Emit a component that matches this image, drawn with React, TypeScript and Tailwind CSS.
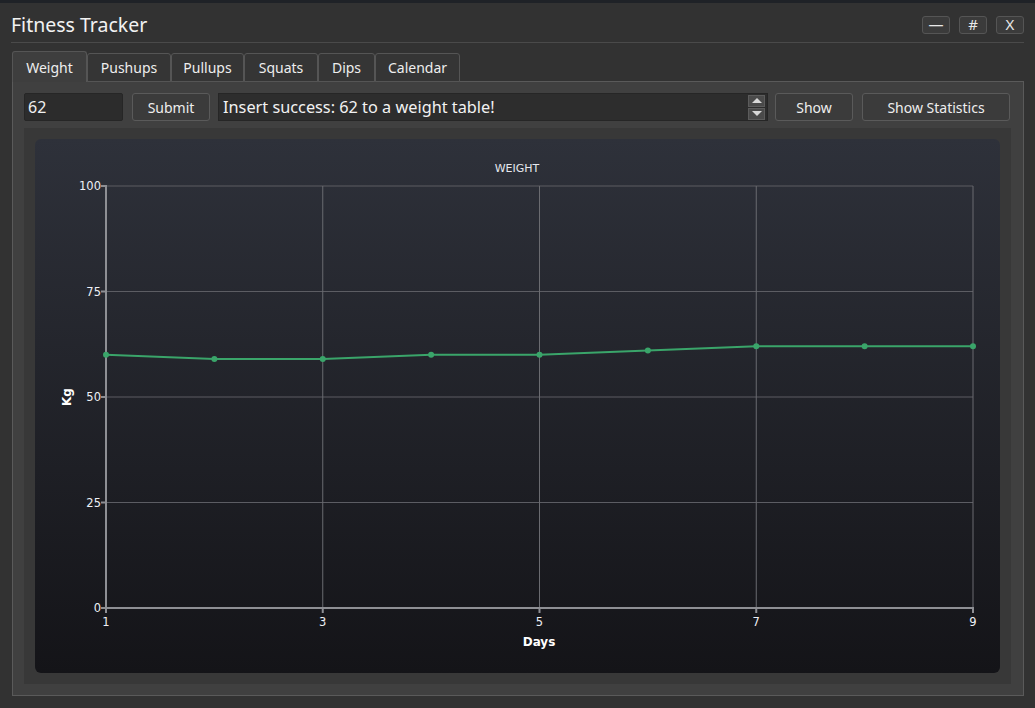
import React from "react";

const font = { fontFamily: '"Noto Sans", "Open Sans", sans-serif' };

const data = [60, 59, 59, 60, 60, 61, 62, 62, 62];

// plot area inside the svg
const PX0 = 71;
const PX1 = 938;
const PY0 = 47;
const PY1 = 469;

const sx = (d: number) => PX0 + ((d - 1) / 8) * (PX1 - PX0);
const sy = (v: number) => PY1 - (v / 100) * (PY1 - PY0);

function WeightChart() {
  const points = data.map((v, i) => `${sx(i + 1)},${sy(v)}`).join(" ");
  return (
    <svg width="965" height="534" viewBox="0 0 965 534" className="block">
      <defs>
        <linearGradient id="bg" x1="0" y1="0" x2="0" y2="1">
          <stop offset="0" stopColor="#2e313a" />
          <stop offset="1" stopColor="#141418" />
        </linearGradient>
      </defs>
      <rect x="0" y="0" width="965" height="534" rx="6" fill="url(#bg)" />
      <text x="482" y="33" fill="#e6e8ee" fontSize="11" textAnchor="middle" fontFamily="DejaVu Sans, sans-serif">
        WEIGHT
      </text>

      {/* grid */}
      {[25, 50, 75, 100].map((v) => (
        <line key={v} x1={PX0} x2={PX1} y1={sy(v)} y2={sy(v)} stroke="#5c5d63" strokeWidth="1" />
      ))}
      {[3, 5, 7, 9].map((d) => (
        <line key={d} x1={sx(d)} x2={sx(d)} y1={PY0} y2={PY1} stroke="#6a6b70" strokeWidth="1" />
      ))}

      {/* axes */}
      <line x1={PX0} x2={PX0} y1={PY0 - 1} y2={PY1 + 5} stroke="#8e8f94" strokeWidth="2" />
      <line x1={PX0 - 5} x2={PX1 + 1} y1={PY1} y2={PY1} stroke="#8e8f94" strokeWidth="2" />
      {[25, 50, 75, 100].map((v) => (
        <line key={v} x1={PX0 - 5} x2={PX0} y1={sy(v)} y2={sy(v)} stroke="#8e8f94" strokeWidth="2" />
      ))}
      {[3, 5, 7, 9].map((d) => (
        <line key={d} x1={sx(d)} x2={sx(d)} y1={PY1} y2={PY1 + 5} stroke="#8e8f94" strokeWidth="2" />
      ))}

      {/* labels */}
      {[0, 25, 50, 75, 100].map((v) => (
        <text
          key={v}
          x={PX0 - 5}
          y={sy(v) + 4}
          fill="#eef0f6"
          fontSize="11.5"
          textAnchor="end"
          fontFamily="DejaVu Sans, sans-serif"
        >
          {v}
        </text>
      ))}
      {[1, 3, 5, 7, 9].map((d) => (
        <text
          key={d}
          x={sx(d)}
          y={PY1 + 18}
          fill="#eef0f6"
          fontSize="11.5"
          textAnchor="middle"
          fontFamily="DejaVu Sans, sans-serif"
        >
          {d}
        </text>
      ))}
      <text
        x="0"
        y="0"
        transform="translate(36 258) rotate(-90)"
        fill="#ffffff"
        fontSize="12"
        fontWeight="bold"
        textAnchor="middle"
        fontFamily="DejaVu Sans, sans-serif"
      >
        Kg
      </text>
      <text x="504" y="507" fill="#ffffff" fontSize="12" fontWeight="bold" textAnchor="middle" fontFamily="DejaVu Sans, sans-serif">
        Days
      </text>

      {/* series */}
      <polyline points={points} fill="none" stroke="#3aa56a" strokeWidth="2" />
      {data.map((v, i) => (
        <circle key={i} cx={sx(i + 1)} cy={sy(v)} r="3" fill="#3aa56a" />
      ))}
    </svg>
  );
}

function WinButton({ label }: { label: string }) {
  return (
    <button className="w-[28px] h-[18px] rounded-[3px] border border-[#555] bg-[#3b3b3b] text-[#e8e8e8] text-[15px] leading-none flex items-center justify-center">
      {label}
    </button>
  );
}

function Btn({ label, w }: { label: string; w: string }) {
  return (
    <button
      className={`${w} h-[28px] rounded-[3px] border border-[#5a5a5a] bg-[#3b3b3b] text-[#eeeeee] text-[14px] flex items-center justify-center`}
    >
      {label}
    </button>
  );
}

const tabs = ["Weight", "Pushups", "Pullups", "Squats", "Dips", "Calendar"];
const tabWidths = ["w-[75px]", "w-[84px]", "w-[73px]", "w-[74px]", "w-[57px]", "w-[85px]"];

export default function App() {
  return (
    <div className="w-[1035px] h-[708px] bg-[#323232] border-t-[3px] border-[#1f2227] overflow-hidden" style={font}>
      <div className="h-[39px] px-[11px] flex items-center justify-between">
        <h1 className="text-[19.5px] text-[#f2f2f2] leading-none mt-[4px]">Fitness Tracker</h1>
        <div className="flex gap-[9px] mt-[4px]">
          <WinButton label="—" />
          <WinButton label="#" />
          <WinButton label="X" />
        </div>
      </div>
      <div className="mx-[11px] h-px bg-[#4a4a4a]" />

      <div className="ml-[12px] mt-[8px] flex items-end">
        {tabs.map((t, i) => (
          <div
            key={t}
            className={`${tabWidths[i]} ${
              i === 0 ? "h-[31px] bg-[#3e3e3e] border-b-0" : "h-[29px] bg-[#353535]"
            } rounded-t-[3px] border border-[#555] text-[14px] text-[#eeeeee] flex items-center justify-center`}
          >
            {t}
          </div>
        ))}
      </div>

      <div className="ml-[12px] w-[1012px] h-[615px] border border-[#5a5a5a] bg-[#404040] px-[11px] pt-[11px] -mt-px">
        <div className="flex items-center h-[28px]">
          <div className="w-[99px] h-[28px] bg-[#2c2c2c] border border-[#262626] rounded-[2px] text-[16px] text-[#f0f0f0] pl-[3px] flex items-center">
            62
          </div>
          <div className="ml-[9px]">
            <Btn label="Submit" w="w-[78px]" />
          </div>
          <div className="ml-[8px] w-[550px] h-[28px] bg-[#2d2d2d] border border-[#262626] flex items-center justify-between pl-[4px] pr-[2px]">
            <span className="text-[16.3px] text-[#f2f2f2]">Insert success: 62 to a weight table!</span>
            <div className="flex flex-col gap-[1px]">
              <div className="w-[17px] h-[12px] bg-[#4a4a4a] border border-[#5c5c5c] flex items-center justify-center">
                <div className="w-0 h-0 border-l-[5px] border-r-[5px] border-b-[5px] border-l-transparent border-r-transparent border-b-[#d8d8d8]" />
              </div>
              <div className="w-[17px] h-[12px] bg-[#4a4a4a] border border-[#5c5c5c] flex items-center justify-center">
                <div className="w-0 h-0 border-l-[5px] border-r-[5px] border-t-[5px] border-l-transparent border-r-transparent border-t-[#d8d8d8]" />
              </div>
            </div>
          </div>
          <div className="ml-[7px]">
            <Btn label="Show" w="w-[78px]" />
          </div>
          <div className="ml-[9px]">
            <Btn label="Show Statistics" w="w-[148px]" />
          </div>
        </div>

        <div className="mt-[7px] w-[987px] h-[556px] bg-[#383838] p-[11px]">
          <WeightChart />
        </div>
      </div>
    </div>
  );
}
